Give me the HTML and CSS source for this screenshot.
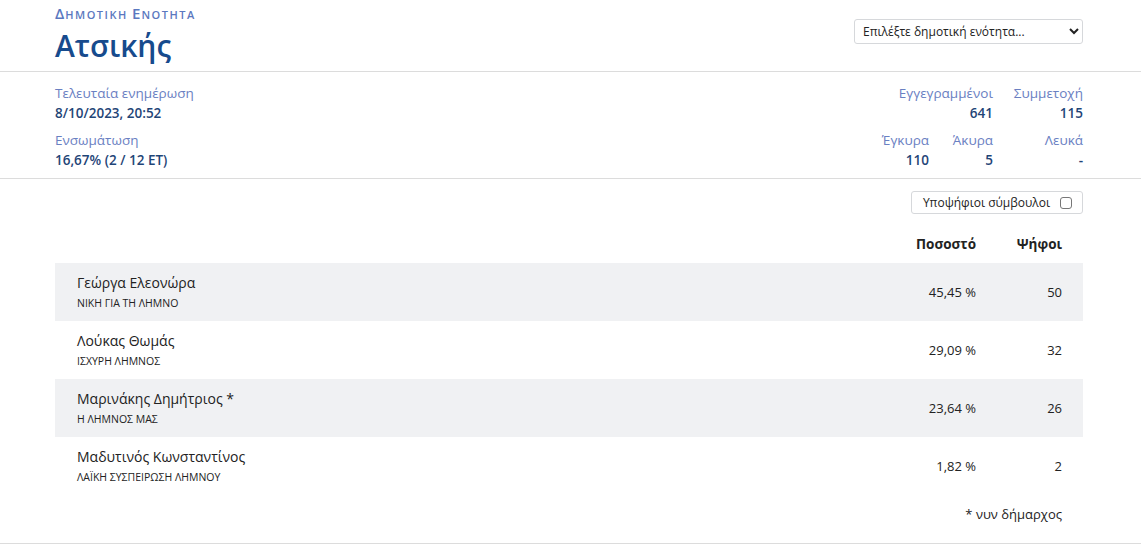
FILE: index.html
```html
<!DOCTYPE html>
<html lang="el">
<head>
<meta charset="utf-8">
<title>Ατσικής</title>
<link rel="stylesheet" href="styles.css">
</head>
<body>
<header class="band head">
  <div class="wrap head-inner">
    <div class="titles">
      <div class="kicker"><span class="big">Δ</span>ημοτική <span class="big">Ε</span>νότητα</div>
      <h1 class="title">Ατσικής</h1>
    </div>
    <div class="picker">
      <select class="select">
        <option>Επιλέξτε δημοτική ενότητα...</option>
      </select>
    </div>
  </div>
</header>
<section class="band info">
  <div class="wrap info-inner">
    <div class="info-left">
      <div class="stat">
        <div class="lbl">Τελευταία ενημέρωση</div>
        <div class="val">8/10/2023, 20:52</div>
      </div>
      <div class="stat">
        <div class="lbl">Ενσωμάτωση</div>
        <div class="val">16,67% (2 / 12 ΕΤ)</div>
      </div>
    </div>
    <div class="info-right">
      <div class="stat span2">
        <div class="lbl">Εγγεγραμμένοι</div>
        <div class="val">641</div>
      </div>
      <div class="stat">
        <div class="lbl">Συμμετοχή</div>
        <div class="val">115</div>
      </div>
      <div class="stat">
        <div class="lbl">Έγκυρα</div>
        <div class="val">110</div>
      </div>
      <div class="stat">
        <div class="lbl">Άκυρα</div>
        <div class="val">5</div>
      </div>
      <div class="stat">
        <div class="lbl">Λευκά</div>
        <div class="val">-</div>
      </div>
    </div>
  </div>
</section>
<main class="band results">
  <div class="wrap">
    <div class="toolbar">
      <label class="toggle">Υποψήφιοι σύμβουλοι <span class="box"></span></label>
    </div>
    <div class="table">
      <div class="row thead">
        <div class="c-name"></div>
        <div class="c-pct">Ποσοστό</div>
        <div class="c-votes">Ψήφοι</div>
      </div>
      <div class="row odd">
        <div class="c-name"><div class="name">Γεώργα Ελεονώρα</div><div class="party">ΝΙΚΗ ΓΙΑ ΤΗ ΛΗΜΝΟ</div></div>
        <div class="c-pct">45,45 %</div>
        <div class="c-votes">50</div>
      </div>
      <div class="row">
        <div class="c-name"><div class="name">Λούκας Θωμάς</div><div class="party">ΙΣΧΥΡΗ ΛΗΜΝΟΣ</div></div>
        <div class="c-pct">29,09 %</div>
        <div class="c-votes">32</div>
      </div>
      <div class="row odd">
        <div class="c-name"><div class="name">Μαρινάκης Δημήτριος *</div><div class="party">Η ΛΗΜΝΟΣ ΜΑΣ</div></div>
        <div class="c-pct">23,64 %</div>
        <div class="c-votes">26</div>
      </div>
      <div class="row">
        <div class="c-name"><div class="name">Μαδυτινός Κωνσταντίνος</div><div class="party">ΛΑΪΚΗ ΣΥΣΠΕΙΡΩΣΗ ΛΗΜΝΟΥ</div></div>
        <div class="c-pct">1,82 %</div>
        <div class="c-votes">2</div>
      </div>
    </div>
    <div class="note">* νυν δήμαρχος</div>
  </div>
</main>
</body>
</html>
```
FILE: styles.css
```css
* { box-sizing: border-box; }
html, body { margin: 0; padding: 0; background: #fff; }
body {
  font-family: "Open Sans", "Noto Sans", sans-serif;
  color: #222;
  font-size: 14px;
}
.wrap { padding: 0 58px 0 55px; }
.band { border-bottom: 1px solid #dcdcdc; }

.head-inner { display: flex; justify-content: space-between; align-items: flex-start; height: 71px; }
.kicker {
  text-transform: uppercase;
  color: #5b78c0;
  font-size: 11px;
  font-weight: 600;
  line-height: 14px;
  margin-top: 6px;
  letter-spacing: 1.5px;
}
.kicker .big { font-size: 15px; letter-spacing: 1px; }
.title {
  margin: 7px 0 0;
  font-size: 30px;
  font-weight: 600;
  color: #174b8d;
  line-height: 34px;
}
.picker { padding-top: 19px; }
.select {
  width: 229px;
  height: 25px;
  font-family: "Open Sans", sans-serif;
  font-size: 12px;
  color: #222;
  border: 1px solid #d6d8db;
  border-radius: 3px;
  background: #fff;
  padding: 0 4px;
}

.info-inner { display: flex; justify-content: space-between; padding-top: 12px; padding-bottom: 8px; }
.info-left { display: flex; flex-direction: column; gap: 8px; }
.lbl { color: #6a80c2; font-size: 13.5px; line-height: 19px; }
.val { color: #1f4577; font-size: 13.5px; font-weight: 600; line-height: 20px; }
.info-right {
  display: grid;
  grid-template-columns: 80px 64px 90px;
  row-gap: 8px;
  text-align: right;
}
.span2 { grid-column: 1 / 3; }

.toolbar { display: flex; justify-content: flex-end; padding-top: 12px; }
.toggle {
  display: flex; align-items: center; gap: 10px;
  height: 23px;
  padding: 0 10px 0 11px;
  border: 1px solid #d6d8db;
  border-radius: 3px;
  font-size: 12px;
  color: #222;
}
.box {
  width: 12px; height: 12px;
  border: 1px solid #777;
  border-radius: 3px;
  background: #fff;
}

.table { margin-top: 21px; }
.row { display: flex; align-items: center; min-height: 58px; }
.row.odd { background: #f0f1f3; }
.row.thead { min-height: 0; height: 28px; align-items: flex-start; font-weight: 700; font-size: 13.5px; color: #222; }
.c-name { flex: 1; padding-left: 22px; }
.c-pct { width: 90px; text-align: right; font-size: 13px; }
.c-votes { width: 107px; padding-right: 21px; text-align: right; font-size: 13px; }
.thead .c-pct, .thead .c-votes { font-size: 13.5px; }
.name { font-size: 14px; line-height: 20px; color: #222; }
.party { font-size: 10.5px; line-height: 16px; margin-top: 2px; color: #222; }
.note { text-align: right; padding-right: 21px; font-size: 13px; margin-top: 10px; height: 38px; }
```
